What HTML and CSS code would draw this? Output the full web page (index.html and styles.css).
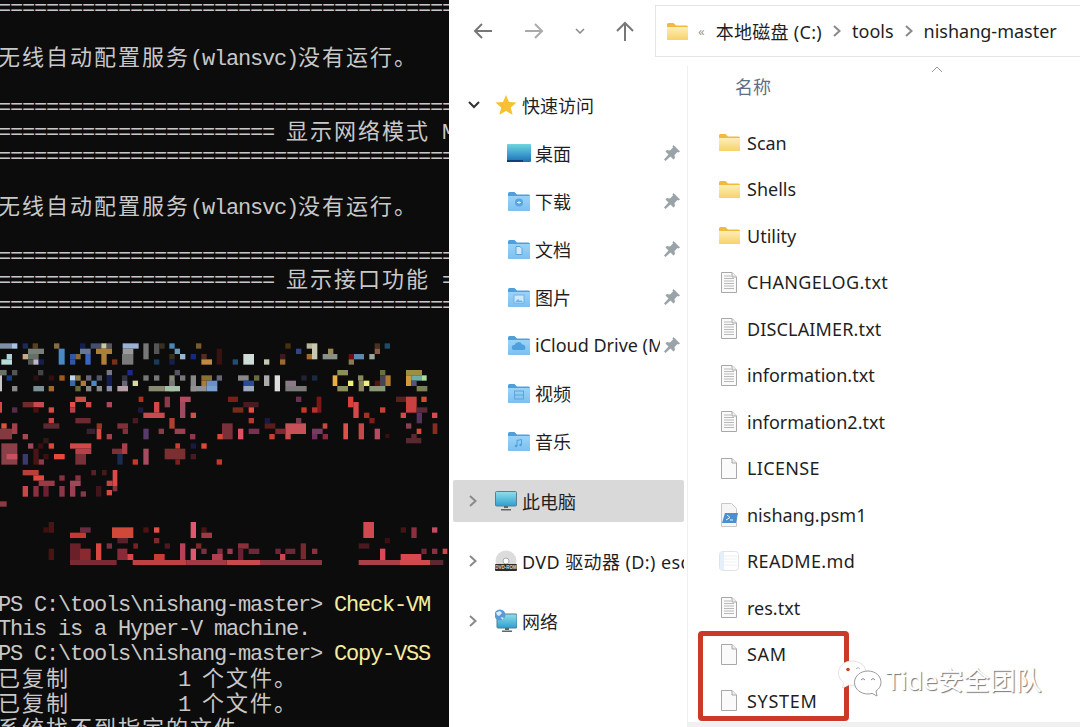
FILE: index.html
```html
<!DOCTYPE html>
<html lang="zh-CN">
<head>
<meta charset="utf-8">
<title>nishang-master</title>
<link rel="stylesheet" href="styles.css">
</head>
<body>
<svg class="defs" width="0" height="0" aria-hidden="true">
  <defs>
    <linearGradient id="gy" x1="0" y1="0" x2="0" y2="1"><stop offset="0" stop-color="#fdeeb8"/><stop offset="1" stop-color="#f8d26a"/></linearGradient>
    <linearGradient id="gb" x1="0" y1="0" x2="0" y2="1"><stop offset="0" stop-color="#9bd3f8"/><stop offset="1" stop-color="#7cc0f0"/></linearGradient>
    <linearGradient id="gd" x1="0" y1="0" x2="0" y2="1"><stop offset="0" stop-color="#6fd6dc"/><stop offset=".55" stop-color="#3f9fd0"/><stop offset="1" stop-color="#1f6fb0"/></linearGradient>
    <linearGradient id="gm" x1="0" y1="0" x2="0" y2="1"><stop offset="0" stop-color="#8fe0e8"/><stop offset="1" stop-color="#2f9fd0"/></linearGradient>
    <symbol id="folder" viewBox="0 0 21 17"><path d="M0 1.5Q0 0 1.5 0h5L9 2.500h10.500Q21 2.500 21 4v11.500Q21 17 19.500 17h-18Q0 17 0 15.500z" fill="#f2b93f"/><path d="M0 4h21v11.500Q21 17 19.500 17h-18Q0 17 0 15.500z" fill="url(#gy)"/></symbol>
    <symbol id="bfolder" viewBox="0 0 22 19"><path d="M0 1.500Q0 0 1.500 0h5L9 2.500h11.500Q22 2.500 22 4v13.500Q22 19 20.500 19h-19Q0 19 0 17.500z" fill="#4f9fdc"/><path d="M0 4h22v13.500Q22 19 20.500 19h-19Q0 19 0 17.500z" fill="url(#gb)"/></symbol>
    <symbol id="doc" viewBox="0 0 16 21"><path d="M.5.500h10.500l4.500 4.500v15.500H.5z" fill="#fafafa" stroke="#a8a8a8"/><path d="M11 .5v4.500h4.500" fill="#eee" stroke="#a8a8a8"/></symbol>
    <symbol id="pin" viewBox="0 0 16 16"><path d="M9.500 0 16 6.500l-1.500 1-1-.5-3 3 .5 3-1.500 1.500-3-3L1.500 16 0 14.500l4.500-5-3-3L3 5l3 .5 3-3-.5-1z" fill="#9aa3a8"/></symbol>
    <symbol id="chev-r" viewBox="0 0 12 14"><path d="M3 2l5.500 5L3 12" fill="none" stroke="#8a8a8a" stroke-width="2"/></symbol>
  </defs>
</svg>

<section class="term">
  <div class="line rule">====================================================</div>
  <div class="line"> </div>
  <div class="line mix"><span class="cj">无线自动配置服务</span>(wlansvc)<span class="cj">没有运行。</span></div>
  <div class="line"> </div>
  <div class="line rule">====================================================</div>
  <div class="line rule">======================= <span class="cj">显示网络模式</span> M</div>
  <div class="line rule">====================================================</div>
  <div class="line"> </div>
  <div class="line mix"><span class="cj">无线自动配置服务</span>(wlansvc)<span class="cj">没有运行。</span></div>
  <div class="line"> </div>
  <div class="line rule">====================================================</div>
  <div class="line rule">======================= <span class="cj">显示接口功能</span> =</div>
  <div class="line rule">====================================================</div>

  <svg class="mosaic" width="449" height="235" viewBox="0 0 1347 705" aria-hidden="true">
    <g>
      <rect x="0" y="40" width="36" height="16" fill="#7f8fa8"/><rect x="36" y="40" width="16" height="16" fill="#a8c4e4"/><rect x="68" y="40" width="16" height="16" fill="#1a2a5a"/><rect x="98" y="40" width="16" height="16" fill="#5a4020"/><rect x="162" y="40" width="16" height="16" fill="#8a6a40"/><rect x="240" y="40" width="16" height="16" fill="#141e50"/><rect x="272" y="40" width="32" height="16" fill="#44506a"/><rect x="304" y="40" width="16" height="16" fill="#c8c8a8"/><rect x="320" y="40" width="16" height="16" fill="#556"/><rect x="368" y="40" width="48" height="16" fill="#9ab0d4"/><rect x="430" y="40" width="16" height="48" fill="#777"/><rect x="462" y="40" width="16" height="32" fill="#555"/><rect x="478" y="40" width="16" height="16" fill="#3a3020"/><rect x="508" y="40" width="16" height="16" fill="#4a88b8"/><rect x="588" y="40" width="16" height="16" fill="#7a5a30"/><rect x="856" y="40" width="16" height="16" fill="#4a3010"/><rect x="920" y="40" width="16" height="16" fill="#b8b498"/><rect x="936" y="40" width="16" height="48" fill="#c8c8b0"/><rect x="1124" y="40" width="16" height="16" fill="#4a3020"/><rect x="1154" y="40" width="16" height="16" fill="#204a6a"/>
      <rect x="84" y="56" width="48" height="16" fill="#777f78"/><rect x="176" y="56" width="18" height="48" fill="#4a88c8"/><rect x="240" y="56" width="32" height="16" fill="#667799"/><rect x="288" y="56" width="48" height="16" fill="#ad7e34"/><rect x="368" y="56" width="32" height="16" fill="#9a9a9a"/><rect x="524" y="56" width="16" height="16" fill="#6a9ab8"/><rect x="650" y="56" width="16" height="48" fill="#3a1010"/><rect x="888" y="56" width="16" height="16" fill="#334488"/><rect x="984" y="56" width="16" height="16" fill="#998855"/><rect x="1124" y="56" width="16" height="16" fill="#8a5a4a"/>
      <rect x="20" y="72" width="16" height="16" fill="#a8d4d8"/><rect x="68" y="72" width="16" height="16" fill="#c8a888"/><rect x="84" y="72" width="32" height="16" fill="#667066"/><rect x="210" y="72" width="16" height="16" fill="#3355a8"/><rect x="226" y="72" width="16" height="16" fill="#8a6a30"/><rect x="256" y="72" width="16" height="32" fill="#3a66c0"/><rect x="304" y="72" width="16" height="32" fill="#b08038"/><rect x="366" y="72" width="34" height="32" fill="#7a7a7a"/><rect x="508" y="72" width="16" height="16" fill="#3a3020"/><rect x="540" y="72" width="16" height="16" fill="#9ab8cc"/><rect x="572" y="72" width="16" height="16" fill="#142a80"/><rect x="604" y="72" width="16" height="16" fill="#5a2a20"/><rect x="730" y="72" width="32" height="32" fill="#cfdcd8"/><rect x="840" y="72" width="16" height="16" fill="#401820"/><rect x="920" y="72" width="16" height="16" fill="#a06a28"/><rect x="968" y="72" width="44" height="16" fill="#8a9088"/><rect x="1046" y="72" width="16" height="16" fill="#6a1010"/><rect x="1062" y="72" width="30" height="16" fill="#5a88b0"/><rect x="1108" y="72" width="16" height="16" fill="#9aa8a0"/>
      <rect x="4" y="88" width="32" height="16" fill="#b8dcd8"/><rect x="84" y="88" width="16" height="16" fill="#555a58"/><rect x="100" y="88" width="16" height="16" fill="#c0b8c8"/><rect x="116" y="88" width="16" height="16" fill="#141e50"/><rect x="210" y="88" width="16" height="16" fill="#3355a8"/><rect x="336" y="88" width="16" height="16" fill="#7a3018"/><rect x="462" y="88" width="16" height="16" fill="#1a3a5a"/><rect x="508" y="88" width="16" height="16" fill="#141e50"/><rect x="604" y="88" width="32" height="16" fill="#c08a40"/><rect x="698" y="88" width="16" height="16" fill="#205070"/><rect x="792" y="88" width="16" height="16" fill="#c8c8b0"/><rect x="840" y="88" width="16" height="16" fill="#9a6a30"/><rect x="1046" y="88" width="16" height="16" fill="#8a7a50"/>

      <rect x="0" y="120" width="20" height="16" fill="#6a7068"/><rect x="36" y="120" width="16" height="16" fill="#555"/><rect x="114" y="120" width="16" height="16" fill="#444"/><rect x="320" y="120" width="16" height="16" fill="#778"/><rect x="382" y="120" width="16" height="16" fill="#1a2a88"/><rect x="524" y="120" width="16" height="16" fill="#556"/><rect x="1012" y="120" width="32" height="16" fill="#8a9058"/><rect x="1140" y="120" width="16" height="16" fill="#6a7040"/><rect x="1218" y="120" width="48" height="16" fill="#9a9040"/>
      <rect x="0" y="136" width="6" height="48" fill="#c8c8c8"/><rect x="20" y="136" width="16" height="16" fill="#1a3a88"/><rect x="100" y="136" width="16" height="16" fill="#2a1010"/><rect x="146" y="136" width="16" height="16" fill="#301010"/><rect x="178" y="136" width="16" height="16" fill="#a05a20"/><rect x="210" y="136" width="16" height="16" fill="#c0d8e8"/><rect x="226" y="136" width="16" height="16" fill="#8a7a50"/><rect x="258" y="136" width="16" height="16" fill="#667"/><rect x="290" y="136" width="16" height="16" fill="#556"/><rect x="320" y="136" width="16" height="32" fill="#141e50"/><rect x="366" y="136" width="16" height="16" fill="#334"/><rect x="430" y="136" width="16" height="16" fill="#777"/><rect x="462" y="136" width="16" height="16" fill="#777"/><rect x="508" y="136" width="16" height="48" fill="#8a8878"/><rect x="540" y="136" width="16" height="16" fill="#777"/><rect x="572" y="136" width="16" height="48" fill="#888"/><rect x="604" y="136" width="32" height="16" fill="#8a7030"/><rect x="650" y="136" width="16" height="16" fill="#667"/><rect x="714" y="136" width="32" height="16" fill="#888"/><rect x="762" y="136" width="16" height="16" fill="#6a6a40"/><rect x="792" y="136" width="16" height="32" fill="#aaa"/><rect x="824" y="136" width="16" height="48" fill="#ddd"/><rect x="904" y="136" width="16" height="16" fill="#223"/><rect x="936" y="136" width="16" height="16" fill="#1a2a40"/><rect x="998" y="136" width="14" height="32" fill="#e8b040"/><rect x="1074" y="136" width="16" height="16" fill="#8a8860"/><rect x="1140" y="136" width="16" height="32" fill="#445"/><rect x="1156" y="136" width="16" height="32" fill="#b07a30"/><rect x="1218" y="136" width="16" height="32" fill="#d09a40"/><rect x="1234" y="136" width="30" height="16" fill="#6ab0a8"/><rect x="1264" y="136" width="16" height="16" fill="#a8e0a0"/>
      <rect x="210" y="152" width="16" height="16" fill="#3a66b0"/><rect x="242" y="152" width="16" height="16" fill="#b07a30"/><rect x="274" y="152" width="16" height="16" fill="#4a88c8"/><rect x="366" y="152" width="16" height="16" fill="#667"/><rect x="398" y="152" width="16" height="16" fill="#d8d8a8"/><rect x="508" y="152" width="16" height="16" fill="#777"/><rect x="604" y="152" width="16" height="16" fill="#b07a30"/><rect x="620" y="152" width="32" height="16" fill="#6a90c8"/><rect x="730" y="152" width="32" height="16" fill="#2a4a9a"/><rect x="856" y="152" width="32" height="16" fill="#8a7a8a"/><rect x="1044" y="152" width="16" height="16" fill="#f0f080"/><rect x="1076" y="152" width="16" height="16" fill="#8a8860"/><rect x="1092" y="152" width="16" height="16" fill="#f0f080"/><rect x="1124" y="152" width="16" height="16" fill="#5a1010"/><rect x="1234" y="152" width="16" height="16" fill="#557"/>
      <rect x="36" y="168" width="16" height="16" fill="#888"/><rect x="100" y="168" width="32" height="16" fill="#7a9098"/><rect x="146" y="168" width="16" height="16" fill="#a06a30"/><rect x="226" y="168" width="16" height="16" fill="#6a6840"/><rect x="258" y="168" width="16" height="16" fill="#888"/><rect x="290" y="168" width="16" height="16" fill="#888"/><rect x="320" y="168" width="16" height="16" fill="#8a8aaa"/><rect x="352" y="168" width="32" height="16" fill="#b8a0a8"/><rect x="446" y="168" width="48" height="16" fill="#8a8a70"/><rect x="494" y="168" width="46" height="16" fill="#a8c0a8"/><rect x="572" y="168" width="48" height="16" fill="#909090"/><rect x="620" y="168" width="32" height="16" fill="#7aa0d0"/><rect x="730" y="168" width="32" height="16" fill="#a0a8c0"/><rect x="856" y="168" width="64" height="16" fill="#7a7a78"/><rect x="1012" y="168" width="32" height="16" fill="#8a9060"/><rect x="1076" y="168" width="16" height="16" fill="#8a8860"/><rect x="1108" y="168" width="48" height="16" fill="#8a9878"/><rect x="1250" y="168" width="32" height="16" fill="#7a8058"/>
    </g>
    <g>
      <rect x="226" y="200" width="32" height="16" fill="#c85048"/><rect x="416" y="200" width="14" height="16" fill="#b03020"/><rect x="494" y="200" width="16" height="32" fill="#8a3a4a"/><rect x="540" y="200" width="32" height="16" fill="#b84a60"/><rect x="684" y="200" width="30" height="16" fill="#7a2018"/><rect x="888" y="200" width="16" height="16" fill="#6a3050"/><rect x="950" y="200" width="14" height="48" fill="#7a1818"/><rect x="1044" y="200" width="16" height="32" fill="#d84038"/><rect x="1188" y="200" width="30" height="16" fill="#5a2020"/><rect x="1218" y="200" width="32" height="48" fill="#c84040"/><rect x="1264" y="200" width="16" height="16" fill="#d84838"/>
      <rect x="68" y="216" width="32" height="16" fill="#702a2a"/><rect x="100" y="216" width="32" height="16" fill="#c84a50"/><rect x="210" y="216" width="16" height="16" fill="#e05048"/><rect x="258" y="216" width="16" height="16" fill="#d04840"/><rect x="320" y="216" width="16" height="16" fill="#a84a5a"/><rect x="462" y="216" width="16" height="32" fill="#d04848"/><rect x="540" y="216" width="16" height="48" fill="#a04a60"/><rect x="730" y="216" width="46" height="16" fill="#4a1a20"/><rect x="1060" y="216" width="16" height="48" fill="#d84848"/>
      <rect x="0" y="216" width="6" height="32" fill="#d84848"/><rect x="36" y="232" width="16" height="16" fill="#5a2a4a"/><rect x="100" y="232" width="16" height="16" fill="#4a1010"/><rect x="146" y="232" width="16" height="16" fill="#d84848"/><rect x="210" y="232" width="16" height="16" fill="#b84048"/><rect x="414" y="232" width="16" height="16" fill="#1a1a40"/><rect x="698" y="232" width="32" height="16" fill="#7a2a18"/><rect x="746" y="232" width="16" height="16" fill="#e05040"/><rect x="904" y="232" width="16" height="16" fill="#c83828"/><rect x="936" y="232" width="16" height="16" fill="#b83030"/><rect x="1140" y="232" width="16" height="16" fill="#c84038"/><rect x="1250" y="232" width="32" height="16" fill="#5a2a3a"/>
      <rect x="430" y="248" width="64" height="16" fill="#c84a50"/><rect x="572" y="248" width="16" height="16" fill="#d05048"/><rect x="1092" y="248" width="16" height="16" fill="#a83020"/><rect x="1202" y="248" width="16" height="16" fill="#d84848"/><rect x="1250" y="248" width="16" height="32" fill="#5a3060"/><rect x="1296" y="248" width="16" height="16" fill="#d84a50"/>
      <rect x="146" y="264" width="16" height="16" fill="#c84040"/><rect x="226" y="264" width="46" height="16" fill="#6a2a30"/><rect x="398" y="264" width="16" height="16" fill="#4a1a20"/><rect x="508" y="264" width="16" height="32" fill="#b04030"/><rect x="746" y="264" width="16" height="16" fill="#b83830"/><rect x="794" y="264" width="16" height="16" fill="#1a1a40"/><rect x="888" y="264" width="16" height="16" fill="#7a3a50"/><rect x="1108" y="264" width="16" height="16" fill="#7a2018"/>
      <rect x="4" y="280" width="16" height="16" fill="#e05040"/><rect x="36" y="280" width="16" height="32" fill="#a04048"/><rect x="130" y="280" width="48" height="16" fill="#5a2a30"/><rect x="290" y="280" width="16" height="16" fill="#a03020"/><rect x="352" y="280" width="32" height="16" fill="#803038"/><rect x="666" y="280" width="32" height="48" fill="#7a3038"/><rect x="794" y="280" width="32" height="16" fill="#5a1c1c"/><rect x="856" y="280" width="62" height="32" fill="#c85058"/><rect x="968" y="280" width="14" height="16" fill="#c84a40"/><rect x="1030" y="280" width="14" height="48" fill="#e05048"/><rect x="1076" y="280" width="16" height="48" fill="#c84848"/><rect x="1218" y="280" width="16" height="16" fill="#8a4050"/><rect x="1298" y="280" width="14" height="32" fill="#8a2a20"/>
      <rect x="0" y="296" width="36" height="32" fill="#843a40"/><rect x="260" y="296" width="26" height="16" fill="#3a2030"/><rect x="290" y="296" width="14" height="32" fill="#d84a40"/><rect x="368" y="296" width="16" height="16" fill="#803038"/><rect x="430" y="296" width="16" height="32" fill="#5a3a6a"/><rect x="476" y="296" width="16" height="16" fill="#8a3a48"/><rect x="524" y="296" width="32" height="16" fill="#9a4050"/><rect x="714" y="296" width="16" height="32" fill="#e05060"/><rect x="746" y="296" width="32" height="16" fill="#7a3050"/><rect x="826" y="296" width="30" height="16" fill="#7a2a30"/><rect x="936" y="296" width="32" height="16" fill="#7a3a60"/><rect x="1124" y="296" width="16" height="32" fill="#b84a60"/><rect x="1250" y="296" width="14" height="16" fill="#d84838"/>
      <rect x="68" y="312" width="16" height="16" fill="#a04a50"/><rect x="320" y="312" width="16" height="16" fill="#a04048"/><rect x="570" y="312" width="16" height="16" fill="#8a3a50"/><rect x="652" y="312" width="16" height="16" fill="#d84838"/><rect x="808" y="312" width="16" height="16" fill="#c84030"/><rect x="856" y="312" width="16" height="16" fill="#c85048"/><rect x="936" y="312" width="16" height="16" fill="#6a3060"/><rect x="968" y="312" width="16" height="16" fill="#8a2a40"/><rect x="1234" y="312" width="16" height="16" fill="#5a2a30"/><rect x="1156" y="312" width="12" height="12" fill="#3a1010"/>
      <rect x="130" y="324" width="16" height="16" fill="#301818"/><rect x="1218" y="324" width="46" height="16" fill="#5a2830"/>
      <rect x="4" y="340" width="48" height="64" fill="#8a4048"/><rect x="20" y="372" width="32" height="16" fill="#c85060"/><rect x="84" y="340" width="16" height="16" fill="#9a4a5a"/><rect x="146" y="340" width="16" height="16" fill="#d84838"/><rect x="114" y="340" width="16" height="16" fill="#3a1010"/><rect x="210" y="340" width="64" height="16" fill="#d04848"/><rect x="226" y="356" width="48" height="16" fill="#b84048"/><rect x="226" y="372" width="32" height="32" fill="#7a3038"/><rect x="366" y="340" width="16" height="32" fill="#a84048"/><rect x="336" y="356" width="30" height="16" fill="#7a3038"/><rect x="526" y="340" width="14" height="16" fill="#c84030"/><rect x="494" y="356" width="62" height="32" fill="#7a3030"/><rect x="572" y="340" width="16" height="16" fill="#1a1a40"/><rect x="604" y="340" width="16" height="16" fill="#e04838"/>
      <rect x="68" y="372" width="16" height="32" fill="#3a3a70"/><rect x="100" y="356" width="16" height="48" fill="#4a1414"/><rect x="162" y="372" width="32" height="16" fill="#e84838"/><rect x="130" y="372" width="16" height="16" fill="#3a1010"/><rect x="430" y="356" width="16" height="48" fill="#a84a60"/><rect x="352" y="372" width="16" height="32" fill="#1a2a50"/><rect x="572" y="372" width="16" height="16" fill="#4a1a20"/>
      <rect x="398" y="388" width="16" height="16" fill="#c83828"/><rect x="650" y="388" width="16" height="16" fill="#c83828"/><rect x="116" y="388" width="16" height="16" fill="#8a3a48"/><rect x="526" y="388" width="14" height="16" fill="#7a2020"/>
      <rect x="68" y="420" width="48" height="16" fill="#b84038"/><rect x="100" y="436" width="32" height="16" fill="#e04840"/><rect x="116" y="452" width="48" height="16" fill="#9a3a48"/><rect x="178" y="436" width="16" height="16" fill="#8a3040"/><rect x="226" y="436" width="16" height="16" fill="#8a3040"/><rect x="274" y="420" width="14" height="16" fill="#5a2028"/><rect x="306" y="420" width="14" height="16" fill="#4a1818"/><rect x="338" y="420" width="14" height="48" fill="#e04848"/><rect x="320" y="452" width="18" height="16" fill="#c84040"/><rect x="68" y="468" width="16" height="32" fill="#c84848"/><rect x="100" y="468" width="16" height="32" fill="#8a3040"/><rect x="178" y="468" width="16" height="32" fill="#8a3848"/><rect x="210" y="452" width="32" height="16" fill="#a04858"/><rect x="210" y="468" width="16" height="32" fill="#9a4050"/><rect x="242" y="484" width="16" height="16" fill="#8a3848"/><rect x="288" y="468" width="16" height="32" fill="#401418"/><rect x="320" y="480" width="16" height="16" fill="#d84848"/><rect x="338" y="468" width="14" height="16" fill="#8a3038"/><rect x="130" y="468" width="16" height="32" fill="#6a2030"/>
      <rect x="0" y="514" width="20" height="16" fill="#8a3a40"/>
      <rect x="146" y="576" width="16" height="32" fill="#4a1414"/><rect x="130" y="592" width="16" height="16" fill="#401010"/><rect x="336" y="592" width="64" height="32" fill="#d04838"/><rect x="240" y="592" width="32" height="16" fill="#6a2a40"/><rect x="210" y="608" width="48" height="16" fill="#c83830"/><rect x="430" y="592" width="16" height="16" fill="#4a1414"/><rect x="462" y="592" width="16" height="16" fill="#e05048"/><rect x="572" y="576" width="16" height="48" fill="#e05870"/><rect x="604" y="592" width="16" height="16" fill="#4a1414"/><rect x="604" y="608" width="32" height="16" fill="#a03848"/><rect x="1090" y="576" width="32" height="48" fill="#d04850"/><rect x="1202" y="592" width="16" height="16" fill="#4a1414"/><rect x="1234" y="592" width="16" height="32" fill="#8a3040"/><rect x="1296" y="592" width="16" height="16" fill="#c84a60"/>
      <rect x="352" y="624" width="32" height="16" fill="#5a2028"/><rect x="462" y="624" width="16" height="16" fill="#7a2a28"/><rect x="1154" y="624" width="16" height="16" fill="#3a1010"/>
      <rect x="210" y="640" width="32" height="50" fill="#6a2028"/><rect x="240" y="656" width="32" height="34" fill="#8a2a30"/><rect x="288" y="640" width="16" height="50" fill="#d84840"/><rect x="320" y="640" width="16" height="16" fill="#7a3040"/><rect x="352" y="656" width="30" height="34" fill="#8a2a38"/><rect x="400" y="640" width="14" height="16" fill="#7a2028"/><rect x="146" y="656" width="16" height="34" fill="#4a1414"/><rect x="382" y="672" width="18" height="18" fill="#d84848"/><rect x="462" y="672" width="32" height="18" fill="#c83c34"/><rect x="494" y="640" width="16" height="16" fill="#4a1a20"/><rect x="540" y="640" width="16" height="50" fill="#b84058"/><rect x="572" y="656" width="16" height="34" fill="#e05870"/><rect x="588" y="640" width="16" height="16" fill="#7a2a28"/><rect x="604" y="656" width="16" height="16" fill="#7a3040"/><rect x="636" y="672" width="32" height="18" fill="#b04050"/><rect x="652" y="656" width="16" height="16" fill="#7a3040"/><rect x="682" y="656" width="16" height="16" fill="#9a3a50"/><rect x="714" y="640" width="32" height="16" fill="#8a3038"/><rect x="714" y="656" width="16" height="34" fill="#6a2030"/><rect x="746" y="656" width="32" height="16" fill="#6a2838"/><rect x="826" y="656" width="16" height="16" fill="#6a2838"/><rect x="856" y="656" width="30" height="16" fill="#6a2838"/><rect x="902" y="640" width="16" height="48" fill="#7a2830"/><rect x="936" y="656" width="16" height="16" fill="#8a3040"/><rect x="840" y="672" width="16" height="18" fill="#c84850"/><rect x="1076" y="640" width="32" height="16" fill="#4a1a20"/><rect x="1140" y="656" width="16" height="34" fill="#d84858"/><rect x="1202" y="672" width="62" height="18" fill="#d84850"/><rect x="1264" y="656" width="16" height="16" fill="#6a2838"/><rect x="1296" y="656" width="16" height="16" fill="#8a3040"/><rect x="1328" y="656" width="14" height="16" fill="#c84850"/>
      <rect x="210" y="690" width="140" height="15" fill="#7a2a32"/><rect x="398" y="690" width="162" height="15" fill="#c04048"/><rect x="560" y="690" width="120" height="15" fill="#a03a44"/><rect x="680" y="690" width="100" height="15" fill="#c84a50"/><rect x="780" y="690" width="186" height="15" fill="#8a3540"/><rect x="1076" y="690" width="124" height="15" fill="#a84048"/><rect x="1200" y="690" width="90" height="15" fill="#d04850"/><rect x="1290" y="690" width="40" height="15" fill="#5a2830"/>
    </g>
  </svg>

  <div class="line shell"><span>PS C:\tools\nishang-master&gt; </span><span class="cmd">Check-VM</span></div>
  <div class="line shell">This is a Hyper-V machine.</div>
  <div class="line shell"><span>PS C:\tools\nishang-master&gt; </span><span class="cmd">Copy-VSS</span></div>
  <div class="line mix"><span class="cj">已复制</span>         1 <span class="cj">个文件。</span></div>
  <div class="line mix"><span class="cj">已复制</span>         1 <span class="cj">个文件。</span></div>
  <div class="line mix"><span class="cj">系统找不到指定的文件。</span></div>
</section>

<section class="explorer">
  <header class="toolbar">
    <svg class="nav-ic back" width="20" height="18" viewBox="0 0 20 18" aria-hidden="true"><path d="M19 9H2M9 2 2 9l7 7" fill="none" stroke="#777" stroke-width="2"/></svg>
    <svg class="nav-ic fwd" width="20" height="18" viewBox="0 0 20 18" aria-hidden="true"><path d="M1 9h17M11 2l7 7-7 7" fill="none" stroke="#aaa" stroke-width="2"/></svg>
    <svg class="nav-ic drop" width="12" height="8" viewBox="0 0 12 8" aria-hidden="true"><path d="M2 2l4 4 4-4" fill="none" stroke="#888" stroke-width="1.500"/></svg>
    <svg class="nav-ic up" width="20" height="20" viewBox="0 0 20 20" aria-hidden="true"><path d="M10 20V2M2 10l8-8 8 8" fill="none" stroke="#777" stroke-width="2"/></svg>
    <div class="address">
      <svg class="addr-folder" width="21" height="17" aria-hidden="true"><use href="#folder"/></svg>
      <span class="addr-more">«</span>
      <span class="crumb drive">本地磁盘 (C:)</span>
      <svg class="sep" width="12" height="14" aria-hidden="true"><use href="#chev-r"/></svg>
      <span class="crumb">tools</span>
      <svg class="sep" width="12" height="14" aria-hidden="true"><use href="#chev-r"/></svg>
      <span class="crumb">nishang-master</span>
    </div>
  </header>

  <div class="panes">
    <nav class="sidebar">
      <div class="top-row quick">
        <svg class="chev" width="14" height="10" viewBox="0 0 14 10" aria-hidden="true"><path d="M2 2l5 5 5-5" fill="none" stroke="#333" stroke-width="2"/></svg>
        <svg width="22" height="22" viewBox="0 0 22 22" aria-hidden="true"><path d="M11 1l3 7 7.500.6-5.700 4.800 1.800 7.400L11 17l-6.600 3.800 1.800-7.400L.5 8.600 8 8z" fill="#f6c233"/></svg>
        <span class="label">快速访问</span>
      </div>
      <div class="child">
        <svg class="desk" width="24" height="19" viewBox="0 0 24 19" aria-hidden="true"><rect width="24" height="18" rx="1" fill="url(#gd)"/><rect y="16" width="16" height="2" fill="#123f78"/></svg>
        <span class="label">桌面</span><svg class="pin" width="16" height="16" aria-hidden="true"><use href="#pin"/></svg>
      </div>
      <div class="child">
        <svg width="22" height="19" viewBox="0 0 22 19" aria-hidden="true"><use href="#bfolder" width="22" height="19"/><circle cx="11" cy="10.500" r="4" fill="#5aa5de"/><path d="M9 10.500h4M11 9v3" stroke="#cfe9fb" stroke-width="1"/></svg>
        <span class="label">下载</span><svg class="pin" width="16" height="16" aria-hidden="true"><use href="#pin"/></svg>
      </div>
      <div class="child">
        <svg width="22" height="19" viewBox="0 0 22 19" aria-hidden="true"><use href="#bfolder" width="22" height="19"/><path d="M8 6.500h4l2 2v6H8z" fill="#cfe9fb" stroke="#5aa5de"/></svg>
        <span class="label">文档</span><svg class="pin" width="16" height="16" aria-hidden="true"><use href="#pin"/></svg>
      </div>
      <div class="child">
        <svg width="22" height="19" viewBox="0 0 22 19" aria-hidden="true"><use href="#bfolder" width="22" height="19"/><rect x="6" y="7" width="10" height="8" fill="#cfe9fb" stroke="#6fb2e6"/><path d="M7 14l3-3 2 2 1-1 2 2z" fill="#6fb2e6"/></svg>
        <span class="label">图片</span><svg class="pin" width="16" height="16" aria-hidden="true"><use href="#pin"/></svg>
      </div>
      <div class="child">
        <svg width="22" height="19" viewBox="0 0 22 19" aria-hidden="true"><use href="#bfolder" width="22" height="19"/><path d="M6 14a2.500 2.500 0 0 1 .5-5 4 4 0 0 1 7.500-.5A3 3 0 0 1 16 14z" fill="#4f9fdc"/></svg>
        <span class="label">iCloud Drive (M</span><svg class="pin" width="16" height="16" aria-hidden="true"><use href="#pin"/></svg>
      </div>
      <div class="child">
        <svg width="22" height="19" viewBox="0 0 22 19" aria-hidden="true"><use href="#bfolder" width="22" height="19"/><rect x="6.500" y="7" width="9" height="8" fill="none" stroke="#5aa5de"/><path d="M6.500 11h9" stroke="#5aa5de"/></svg>
        <span class="label">视频</span>
      </div>
      <div class="child">
        <svg width="22" height="19" viewBox="0 0 22 19" aria-hidden="true"><use href="#bfolder" width="22" height="19"/><path d="M9 14V8.500l4.500-1V13" fill="none" stroke="#4f9fdc"/><circle cx="8" cy="14" r="1.200" fill="#4f9fdc"/><circle cx="12.500" cy="13" r="1.200" fill="#4f9fdc"/></svg>
        <span class="label">音乐</span>
      </div>
      <div class="top-row pc">
        <svg class="chev" width="12" height="14" aria-hidden="true"><use href="#chev-r"/></svg>
        <svg width="22" height="20" viewBox="0 0 22 20" aria-hidden="true"><rect x=".5" y=".5" width="21" height="14.500" rx="1" fill="url(#gm)" stroke="#5a7f90"/><path d="M9 15h4v2H9zM6 18h10v1.500H6z" fill="#5a6870"/></svg>
        <span class="label">此电脑</span>
      </div>
      <div class="top-row dvd">
        <svg class="chev" width="12" height="14" aria-hidden="true"><use href="#chev-r"/></svg>
        <svg width="22" height="22" viewBox="0 0 22 22" aria-hidden="true"><circle cx="11" cy="11" r="10.500" fill="#dcdcdc"/><circle cx="11" cy="11" r="3" fill="#fff" stroke="#aaa"/><rect y="14" width="22" height="7" rx="1" fill="#2b2b2b"/><text x="11" y="19.300" text-anchor="middle" class="dvd-text">DVD-ROM</text></svg>
        <span class="label dvd-label">DVD 驱动器 (D:) esd</span>
      </div>
      <div class="top-row net">
        <svg class="chev" width="12" height="14" aria-hidden="true"><use href="#chev-r"/></svg>
        <svg width="22" height="24" viewBox="2 0 22 24" aria-hidden="true"><rect x="4" y="5" width="20" height="14" rx="1" fill="url(#gm)" stroke="#4f7f90"/><path d="M12 19h4v2h-4zM9 21.500h10V23H9z" fill="#5a6870"/><circle cx="7" cy="6" r="5.500" fill="#5a9ad8"/><path d="M3 3.500l4-1.500 2 2-3 3-2-1zM8 8l3 1-2 2z" fill="#d8eef8"/></svg>
        <span class="label">网络</span>
      </div>
    </nav>

    <main class="list">
      <div class="col-head">
        <span class="col-name">名称</span>
        <svg class="sort" width="12" height="7" viewBox="0 0 12 7" aria-hidden="true"><path d="M1 6l5-5 5 5" fill="none" stroke="#999"/></svg>
      </div>
      <div class="rows">
        <div class="row folder-row"><svg class="f-ic" width="21" height="17" aria-hidden="true"><use href="#folder"/></svg><span>Scan</span></div>
        <div class="row folder-row"><svg class="f-ic" width="21" height="17" aria-hidden="true"><use href="#folder"/></svg><span>Shells</span></div>
        <div class="row folder-row"><svg class="f-ic" width="21" height="17" aria-hidden="true"><use href="#folder"/></svg><span>Utility</span></div>
        <div class="row doc"><svg class="f-ic" width="16" height="21" viewBox="0 0 16 21" aria-hidden="true"><use href="#doc" width="16" height="21"/><path class="txt-lines" d="M3 4h7M3 6.500h10M3 9h10M3 11.500h10M3 14h10M3 16.500h10"/></svg><span class="caps">CHANGELOG.txt</span></div>
        <div class="row doc"><svg class="f-ic" width="16" height="21" viewBox="0 0 16 21" aria-hidden="true"><use href="#doc" width="16" height="21"/><path class="txt-lines" d="M3 4h7M3 6.500h10M3 9h10M3 11.500h10M3 14h10M3 16.500h10"/></svg><span class="caps-sm">DISCLAIMER.txt</span></div>
        <div class="row doc"><svg class="f-ic" width="16" height="21" viewBox="0 0 16 21" aria-hidden="true"><use href="#doc" width="16" height="21"/><path class="txt-lines" d="M3 4h7M3 6.500h10M3 9h10M3 11.500h10M3 14h10M3 16.500h10"/></svg><span>information.txt</span></div>
        <div class="row doc"><svg class="f-ic" width="16" height="21" viewBox="0 0 16 21" aria-hidden="true"><use href="#doc" width="16" height="21"/><path class="txt-lines" d="M3 4h7M3 6.500h10M3 9h10M3 11.500h10M3 14h10M3 16.500h10"/></svg><span>information2.txt</span></div>
        <div class="row doc"><svg class="f-ic" width="16" height="21" aria-hidden="true"><use href="#doc"/></svg><span class="caps">LICENSE</span></div>
        <div class="row wide"><svg class="f-ic" width="20" height="24" viewBox="0 0 20 24" aria-hidden="true"><path d="M2.500.5h10l5 5v18h-15z" fill="#f6f6f6" stroke="#c8c8c8"/><path d="M6 10h13l-2 10H3z" fill="#4a8fd0"/><path d="M8 12l3 2.500L7 17M11 17h3" fill="none" stroke="#e8f4ff"/></svg><span>nishang.psm1</span></div>
        <div class="row wide"><svg class="f-ic" width="20" height="20" viewBox="0 0 20 20" aria-hidden="true"><rect x=".5" y=".5" width="19" height="19" rx="3" fill="#fff" stroke="#dfe3e8"/><rect x="1" y="1" width="4" height="18" fill="#e4effa"/><path d="M5 5h13M5 8h13M5 11h13M5 14h13" stroke="#eef1f5"/></svg><span class="caps">README.md</span></div>
        <div class="row doc"><svg class="f-ic" width="16" height="21" viewBox="0 0 16 21" aria-hidden="true"><use href="#doc" width="16" height="21"/><path class="txt-lines" d="M3 4h7M3 6.500h10M3 9h10M3 11.500h10M3 14h10M3 16.500h10"/></svg><span>res.txt</span></div>
        <div class="highlight">
          <div class="row doc"><svg class="f-ic" width="16" height="21" aria-hidden="true"><use href="#doc"/></svg><span class="caps-lg">SAM</span></div>
          <div class="row doc"><svg class="f-ic" width="16" height="21" aria-hidden="true"><use href="#doc"/></svg><span class="caps-lg">SYSTEM</span></div>
        </div>
      </div>
      <div class="status"></div>
    </main>
  </div>

  <div class="watermark">
    <svg width="44" height="37" viewBox="0 0 44 37" aria-hidden="true">
      <path d="M14 1C6 1 .5 6.500.5 13c0 4 2 7 5 9.500L4.500 28l6-3c1 .3 2 .4 3.500.4 8 0 14-5.400 14-12.400S22 1 14 1z" fill="#fff" stroke="#e2e2e2"/>
      <circle cx="10" cy="9.500" r="1.800" fill="#c8402c"/><path d="M18 9l2-1.500 2 1.500" fill="none" stroke="#bbb"/>
      <path d="M30 11c-7.500 0-13.500 5-13.500 11.500S22.500 34 30 34c1.500 0 2.500-.2 4-.6l5 2.600-1-5c3-2 5-5 5-8.500C43 16 37.500 11 30 11z" fill="#fff" stroke="#9a9a9a"/>
      <path d="M23 20l2-1.500 2 1.500M33 20l2-1.500 2 1.500" fill="none" stroke="#888"/>
    </svg>
    <span class="wm-text">Tide安全团队</span>
  </div>
</section>
</body>
</html>
```

FILE: styles.css
```css
* { box-sizing: border-box; }

html, body {
  margin: 0;
  height: 727px;
  overflow: hidden;
}

body {
  display: flex;
  background: #fff;
  font-family: "Noto Sans", "Open Sans", "Noto Sans CJK SC", sans-serif;
}

.defs { position: absolute; }

/* Terminal */
.term {
  flex: 0 0 449px;
  height: 727px;
  overflow: hidden;
  background: #0c0c0c;
  color: #c8c8c8;
  font-family: "Liberation Mono", "Noto Sans CJK SC", monospace;
  font-size: 22px;
  letter-spacing: -1.2px;
  line-height: 24.8px;
}

.line {
  height: 24.8px;
  margin-left: -2px;
  white-space: pre;
}

.line:first-child { margin-top: -4.4px; }

.rule { padding-top: 2px; }
.shell { padding-top: 2px; }
.mix { padding-top: 3px; }

.cj {
  font-family: "Noto Sans CJK SC", sans-serif;
  font-size: 22px;
  letter-spacing: 2px;
  line-height: 0;
}

.cmd { color: #f4eca0; }

.mosaic {
  display: block;
  margin: 12px 0 26.6px;
}

/* Explorer */
.explorer {
  flex: 1;
  position: relative;
  min-width: 0;
  margin-left: 1px;
  display: flex;
  flex-direction: column;
  overflow: hidden;
  color: #1f1f1f;
  font-size: 18px;
}

.toolbar {
  flex: 0 0 66px;
  display: flex;
  align-items: center;
  padding: 5px 0 9px 23px;
}

.nav-ic { flex: none; }
.fwd { margin-left: 31px; }
.drop { margin-left: 30px; }
.up { margin-left: 29px; }

.address {
  flex: 1;
  height: 52px;
  margin-left: 20px;
  margin-right: -12px;
  display: flex;
  align-items: center;
  padding-left: 11px;
  border: 1px solid #e5e5e5;
  white-space: nowrap;
}

.addr-more {
  margin: 0 11px 0 10px;
  color: #999;
  font-size: 13px;
}

.drive { letter-spacing: .3px; }

.sep { margin: 0 9px; flex: none; }
.sep:last-of-type { margin-right: 9px; }

.panes {
  flex: 1;
  min-height: 0;
  display: flex;
}

.sidebar {
  flex: 0 0 238px;
  padding: 15px 3px 0;
  border-right: 1px solid #efefef;
  white-space: nowrap;
  overflow: hidden;
}

.top-row {
  height: 42px;
  display: flex;
  align-items: center;
  gap: 5px;
  padding-left: 14px;
  border-radius: 2px;
}

.top-row .chev { margin-right: 11px; flex: none; }
.top-row svg { flex: none; }
.quick .chev { margin-right: 9px; }

.quick { height: 48px; }
.pc { margin-top: 15px; background: #d9d9d9; }
.dvd { margin-top: 18px; }
.net { margin-top: 18px; }

.top-row .label { overflow: hidden; }
.dvd-label { letter-spacing: .4px; }

.child {
  height: 48px;
  display: flex;
  align-items: center;
  padding: 0 4px 0 55px;
}

.child > svg:first-child { flex: none; }
.child > .desk { margin: 0 -1px; }

.child .label {
  flex: 1;
  margin: 0 4px 0 5px;
  overflow: hidden;
  min-width: 0;
}

.pin { flex: none; }

.dvd-text {
  fill: #ddd;
  font: 700 4.500px "Liberation Sans", sans-serif;
}

.list {
  flex: 1;
  min-width: 0;
  display: flex;
  flex-direction: column;
}

.col-head {
  flex: 0 0 53.500px;
  position: relative;
  display: flex;
  align-items: center;
  padding: 0 0 14px 47px;
}

.col-name { color: #5f6f85; font-size: 18px; }

.sort {
  position: absolute;
  left: 243px;
  top: 0;
}

.rows {
  flex: 1;
  min-height: 0;
  overflow: hidden;
}

.row {
  height: 46.500px;
  display: flex;
  align-items: center;
  padding-left: 30px;
  white-space: nowrap;
}

.row .f-ic { flex: none; }
.folder-row .f-ic { margin: 0 7px 0 1px; }
.row.doc .f-ic { margin: 0 10px 0 3px; }
.row.wide .f-ic { margin: 0 8px 0 1px; }

.caps { letter-spacing: .35px; }
.caps-sm { letter-spacing: .15px; }
.caps-lg { letter-spacing: .7px; }

.txt-lines { stroke: #b8b8b8; fill: none; }

.highlight { position: relative; }

.highlight::after {
  content: "";
  box-sizing: border-box;
  position: absolute;
  left: 10px;
  top: 0;
  width: 151px;
  height: 90px;
  border: 5px solid #cb3a28;
  border-radius: 4px;
}

.status {
  flex: 0 0 5px;
  background: #f0f0f0;
}

.watermark {
  position: absolute;
  left: 388px;
  top: 660px;
  display: flex;
  align-items: flex-start;
  gap: 4px;
}

.wm-text {
  font-family: "Noto Sans", "Noto Sans CJK SC", sans-serif;
  font-size: 26px;
  line-height: 40px;
  color: #fff;
  text-shadow: 1px 1px 1px #777;
  white-space: nowrap;
}
```
